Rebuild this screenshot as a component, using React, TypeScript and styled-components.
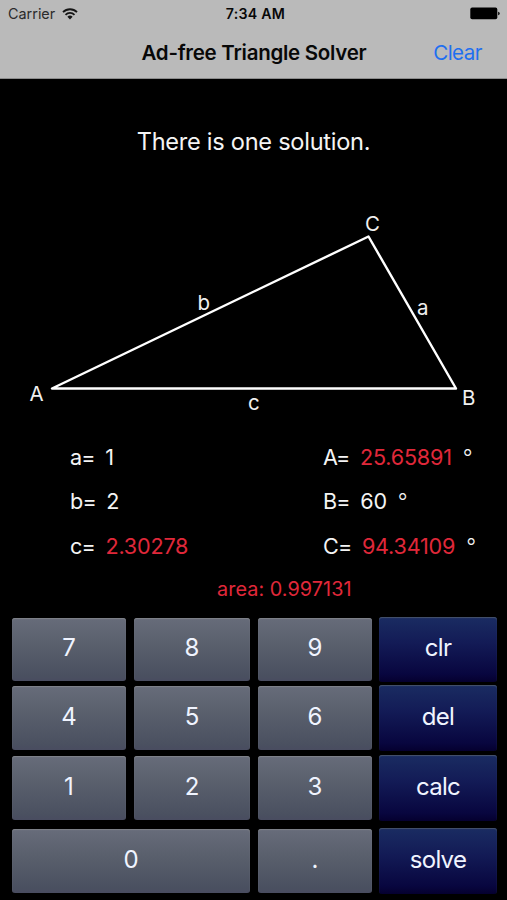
import React from "react";
import styled, { createGlobalStyle } from "styled-components";

const GlobalStyle = createGlobalStyle`
  html, body { margin: 0; background: #000; }
  * { box-sizing: border-box; }
  body { font-family: Inter, Roboto, "Liberation Sans", sans-serif; -webkit-font-smoothing: antialiased; }
`;

const Screen = styled.main`
  width: 507px;
  height: 900px;
  overflow: hidden;
  display: flex;
  flex-direction: column;
  background: #000;
  color: #f4f4f4;
`;

const Header = styled.header`
  height: 79px;
  flex: none;
  background: #bababa;
  border-bottom: 1px solid #8c8c8c;
  color: #080808;
`;

const StatusBar = styled.div`
  display: grid;
  grid-template-columns: 1fr auto 1fr;
  align-items: center;
  height: 27px;
  padding: 0 7px 0 8px;
  font-size: 14.4px;
`;

const Carrier = styled.div`
  display: flex;
  align-items: center;
  gap: 7px;
  color: #2b2b2b;
  letter-spacing: 0;
`;

const Clock = styled.div`
  padding-left: 3px;
  font-size: 14.2px;
  font-weight: 600;
  letter-spacing: 0.25px;
`;

const BatterySlot = styled.div`
  display: flex;
  justify-content: flex-end;
`;

const NavBar = styled.div`
  display: grid;
  grid-template-columns: 1fr auto 1fr;
  align-items: center;
  height: 50px;
  padding: 0 25px;
`;

const Title = styled.h1`
  grid-column: 2;
  margin: 0;
  padding-left: 1px;
  font-size: 20.5px;
  font-weight: 600;
  letter-spacing: -0.27px;
  white-space: nowrap;
`;

const ClearButton = styled.button`
  justify-self: end;
  border: 0;
  padding: 0;
  background: none;
  color: #1e6ff0;
  font: inherit;
  font-size: 20.5px;
  letter-spacing: -0.5px;
`;

const Message = styled.p`
  flex: none;
  margin: 47px 0 0;
  height: 32px;
  line-height: 32px;
  text-align: center;
  font-size: 23.6px;
  letter-spacing: -0.28px;
`;

const Diagram = styled.svg`
  display: block;
  flex: none;
  margin-top: 42px;
  width: 507px;
  height: 220px;
  font-size: 20.5px;
  fill: #f0f0f0;
`;

const Results = styled.section`
  flex: none;
  display: grid;
  grid-template-columns: 253px 1fr;
  grid-template-rows: 44px 44px 45px;
  margin-top: 15px;
  padding-left: 70px;
  align-items: center;
`;

const Measure = styled.div`
  display: flex;
  align-items: center;
  gap: 11px;
  height: 30px;
  font-size: 21.6px;
  line-height: 30px;
  white-space: nowrap;
`;

const Label = styled.span`
  margin-right: -0.6px;
  letter-spacing: -0.8px;
`;

const Value = styled.span<{ $solved?: boolean }>`
  color: ${(p) => (p.$solved ? "#e0283a" : "#f4f4f4")};
  letter-spacing: -0.2px;
`;

const Degree = styled.span`
  font-weight: 300;
`;

const Area = styled.p`
  flex: none;
  margin: 9px 0 0 217px;
  height: 24px;
  line-height: 24px;
  font-size: 19.8px;
  letter-spacing: 0.08px;
  color: #e0283a;
`;

const Keypad = styled.section`
  flex: none;
  display: grid;
  grid-template-columns: 122px 124px 121px 118px;
  grid-template-rows: 68px 70px 73px 67px;
  align-items: start;
  margin: 16px 0 0 12px;
`;

const Key = styled.button<{ $wide?: boolean; $action?: boolean }>`
  grid-column: span ${(p) => (p.$wide ? 2 : 1)};
  height: ${(p) => (p.$action ? 66 : 64)}px;
  margin: ${(p) => (p.$action ? "0" : "1px 8px 0 0")};
  border: 0;
  border-radius: 3px;
  padding: 0 0 4px;
  font: inherit;
  font-size: 24px;
  letter-spacing: ${(p) => (p.$action ? -0.7 : 0)}px;
  color: #f0f4ff;
  background: ${(p) =>
    p.$action
      ? "linear-gradient(#1a2c62, #131b56 40%, #08063f 88%, #05002f)"
      : "linear-gradient(#676c7a, #5a606d 40%, #4a5060 92%, #494c60)"};
  box-shadow: inset 0 1px 1px ${(p) => (p.$action ? "#46536c" : "#80838a")};

  &:nth-child(-n + 4) {
    height: ${(p) => (p.$action ? 65 : 63)}px;
    padding-bottom: 5px;
  }

  &:nth-child(3), &:nth-child(7), &:nth-child(11), &:nth-child(14) {
    margin-right: 7px;
  }
`;

const WifiIcon = () => (
  <svg width="16" height="12" viewBox="0 0 16 12" fill="none" stroke="#151515" strokeWidth="1.8">
    <path d="M1 4.1a10 10 0 0 1 14 0M3.5 6.8a6.4 6.4 0 0 1 9 0" />
    <path d="M8 11.4 5.4 8.8a3.7 3.7 0 0 1 5.2 0Z" fill="#151515" stroke="none" />
  </svg>
);

const BatteryIcon = () => (
  <svg width="30" height="13" viewBox="0 0 30 13" fill="#000">
    <rect x="0.3" y="0.6" width="27" height="11.6" rx="1.8" />
    <path d="M28.2 4.8c2 .6 2 2.8 0 3.4Z" />
  </svg>
);

const measures = [
  { label: "a=", value: "1" },
  { label: "A=", value: "25.65891", solved: true, degree: true },
  { label: "b=", value: "2" },
  { label: "B=", value: "60", degree: true },
  { label: "c=", value: "2.30278", solved: true },
  { label: "C=", value: "94.34109", solved: true, degree: true },
];

const keys = [
  { text: "7" }, { text: "8" }, { text: "9" }, { text: "clr", action: true },
  { text: "4" }, { text: "5" }, { text: "6" }, { text: "del", action: true },
  { text: "1" }, { text: "2" }, { text: "3" }, { text: "calc", action: true },
  { text: "0", wide: true }, { text: "." }, { text: "solve", action: true },
];

export default function App() {
  return (
    <Screen>
      <GlobalStyle />
      <Header>
        <StatusBar>
          <Carrier>Carrier <WifiIcon /></Carrier>
          <Clock>7:34 AM</Clock>
          <BatterySlot><BatteryIcon /></BatterySlot>
        </StatusBar>
        <NavBar>
          <Title>Ad-free Triangle Solver</Title>
          <ClearButton>Clear</ClearButton>
        </NavBar>
      </Header>
      <Message>There is one solution.</Message>
      <Diagram viewBox="0 200 507 220">
        <path d="M52 388.5H456L368.5 236.5Z" fill="none" stroke="#fff" strokeWidth="2.4" strokeLinejoin="round" />
        <text x="29.5" y="400.5">A</text>
        <text x="462" y="404.5">B</text>
        <text x="365" y="231">C</text>
        <text x="417" y="315">a</text>
        <text x="197.5" y="310">b</text>
        <text x="248" y="410">c</text>
      </Diagram>
      <Results>
        {measures.map((m) => (
          <Measure key={m.label}>
            <Label>{m.label}</Label>
            <Value $solved={m.solved}>{m.value}</Value>
            {m.degree && <Degree>°</Degree>}
          </Measure>
        ))}
      </Results>
      <Area>area: 0.997131</Area>
      <Keypad>
        {keys.map((k) => (
          <Key key={k.text} $wide={k.wide} $action={k.action}>{k.text}</Key>
        ))}
      </Keypad>
    </Screen>
  );
}
